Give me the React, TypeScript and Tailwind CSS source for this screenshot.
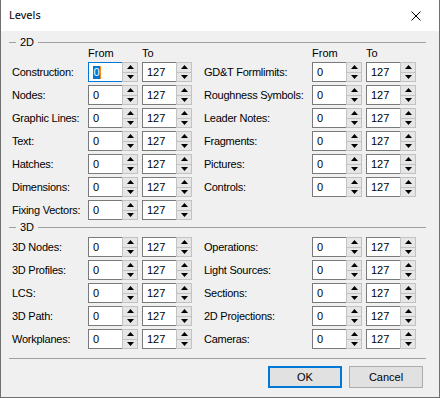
import React from "react";

function Arrow({ up }: { up: boolean }) {
  return (
    <svg width="7" height="4" viewBox="0 0 7 4" className="block">
      {up ? <polygon points="0,4 3.5,0 7,4" fill="#000" /> : <polygon points="0,0 3.5,4 7,0" fill="#000" />}
    </svg>
  );
}

function Spin({ value, focused }: { value: string; focused?: boolean }) {
  return (
    <div className="flex h-[20px] w-[50px] shrink-0">
      <div
        className={
          focused
            ? "w-[34px] h-full bg-white border-y border-l border-[#0078d7] flex items-center pl-[4px]"
            : "w-[34px] h-full bg-white border-y border-l border-[#7a7a7a] flex items-center pl-[4px]"
        }
      >
        {focused ? (
          <span className="flex items-center">
            <span className="bg-[#0078d7] text-white leading-[13px] px-[0.5px]">{value}</span>
            <span className="w-px h-[13px] bg-[#ff8a1a]" />
          </span>
        ) : (
          <span>{value}</span>
        )}
      </div>
      <div className="w-[16px] h-full flex flex-col border border-[#c2c2c2]">
        <div className="flex-1 bg-[#e6e6e6] flex items-center justify-center border-b border-[#c2c2c2]">
          <Arrow up />
        </div>
        <div className="flex-1 bg-[#e6e6e6] flex items-center justify-center">
          <Arrow up={false} />
        </div>
      </div>
    </div>
  );
}

function Row({ label, lw, focused }: { label: string; lw: string; focused?: boolean }) {
  return (
    <div className="flex items-center h-[20px]">
      <span className={lw + " shrink-0 whitespace-nowrap tracking-[-0.25px]"}>{label}</span>
      <div className="flex gap-[4px]">
        <Spin value="0" focused={focused} />
        <Spin value="127" />
      </div>
    </div>
  );
}

function Col({
  labels,
  lw,
  header,
  focusFirst,
}: {
  labels: string[];
  lw: string;
  header?: boolean;
  focusFirst?: boolean;
}) {
  return (
    <div className="flex flex-col">
      {header && (
        <div className="flex h-[11px] leading-[11px] mb-[3px]">
          <span className={lw + " shrink-0"} />
          <span className="w-[54px]">From</span>
          <span>To</span>
        </div>
      )}
      <div className="flex flex-col gap-[3px]">
        {labels.map((l, i) => (
          <Row key={l} label={l} lw={lw} focused={focusFirst && i === 0} />
        ))}
      </div>
    </div>
  );
}

function GroupHeader({ title, cls }: { title: string; cls: string }) {
  return (
    <div className={"flex items-center h-[11px] " + cls}>
      <div className="w-[7px] h-px bg-[#a0a0a0]" />
      <span className="px-[4px] leading-[11px]">{title}</span>
      <div className="flex-1 h-px bg-[#a0a0a0]" />
    </div>
  );
}

export default function App() {
  const left2d = ["Construction:", "Nodes:", "Graphic Lines:", "Text:", "Hatches:", "Dimensions:", "Fixing Vectors:"];
  const right2d = ["GD&T Formlimits:", "Roughness Symbols:", "Leader Notes:", "Fragments:", "Pictures:", "Controls:"];
  const left3d = ["3D Nodes:", "3D Profiles:", "LCS:", "3D Path:", "Workplanes:"];
  const right3d = ["Operations:", "Light Sources:", "Sections:", "2D Projections:", "Cameras:"];

  return (
    <div className="w-[440px] h-[398px] flex flex-col bg-[#f0f0f0] border-x border-b border-[#707070] font-['Liberation_Sans',Arial,sans-serif] text-[11px] text-black overflow-hidden">
      <div className="h-[31px] shrink-0 bg-white flex items-center justify-between">
        <span className="pl-[8px] font-['Noto_Sans',sans-serif] text-[11px]">Levels</span>
        <div className="w-[46px] h-full flex items-center justify-center pr-[1px]">
          <svg width="10" height="10" viewBox="0 0 10 10" className="block">
            <path d="M0.5 0.5 L9.5 9.5 M9.5 0.5 L0.5 9.5" stroke="#000" strokeWidth="1" />
          </svg>
        </div>
      </div>
      <div className="flex-1 flex flex-col pl-[8px] pr-[13px] pt-[6px]">
        <GroupHeader title="2D" cls="" />
        <div className="flex items-start pl-[3px]">
          <Col labels={left2d} lw="w-[76px]" header focusFirst />
          <div className="ml-[12px]">
            <Col labels={right2d} lw="w-[108px]" header />
          </div>
        </div>
        <GroupHeader title="3D" cls="mt-[2px]" />
        <div className="flex items-start pl-[3px] mt-[4px]">
          <Col labels={left3d} lw="w-[76px]" />
          <div className="ml-[12px]">
            <Col labels={right3d} lw="w-[108px]" />
          </div>
        </div>
        <div className="mt-[9px] h-px bg-[#a0a0a0]" />
        <div className="mt-[7px] flex justify-end gap-[7px] pr-[3px]">
          <button className="w-[74px] h-[22px] bg-[#e1e1e1] border-2 border-[#0078d7] flex items-center justify-center">
            OK
          </button>
          <button className="w-[74px] h-[22px] bg-[#e1e1e1] border border-[#adadad] flex items-center justify-center">
            Cancel
          </button>
        </div>
      </div>
    </div>
  );
}
